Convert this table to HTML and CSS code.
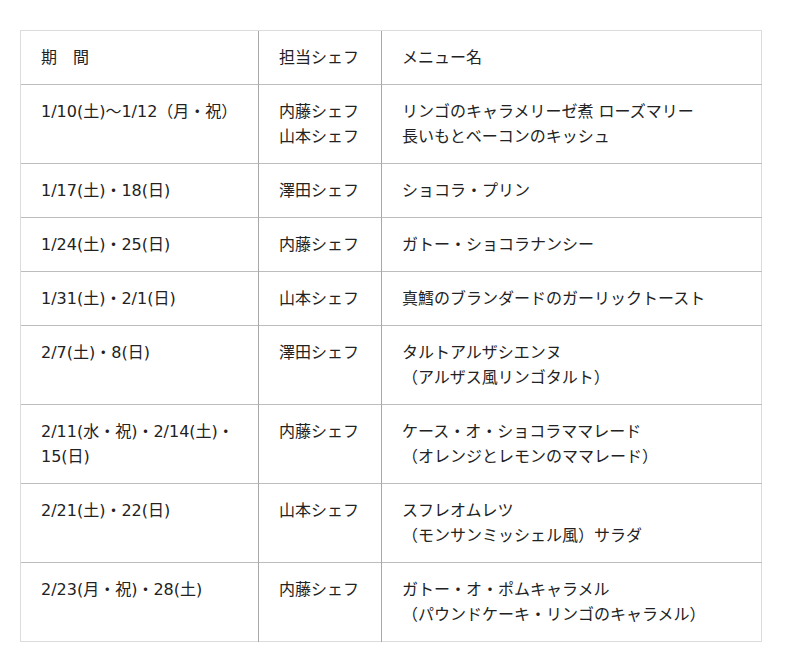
FILE: index.html
```html
<!DOCTYPE html>
<html lang="ja">
<head>
<meta charset="utf-8">
<link rel="stylesheet" href="styles.css">
</head>
<body>
<div class="wrap">
<table class="menu">
<colgroup><col class="c1"><col class="c2"><col class="c3"></colgroup>
<thead>
<tr><th>期　間</th><th>担当シェフ</th><th>メニュー名</th></tr>
</thead>
<tbody>
<tr><td>1/10(土)〜1/12（月・祝）</td><td>内藤シェフ<br>山本シェフ</td><td>リンゴのキャラメリーゼ煮 ローズマリー<br>長いもとベーコンのキッシュ</td></tr>
<tr><td>1/17(土)・18(日)</td><td>澤田シェフ</td><td>ショコラ・プリン</td></tr>
<tr><td>1/24(土)・25(日)</td><td>内藤シェフ</td><td>ガトー・ショコラナンシー</td></tr>
<tr><td>1/31(土)・2/1(日)</td><td>山本シェフ</td><td>真鱈のブランダードのガーリックトースト</td></tr>
<tr><td>2/7(土)・8(日)</td><td>澤田シェフ</td><td>タルトアルザシエンヌ<br>（アルザス風リンゴタルト）</td></tr>
<tr><td>2/11(水・祝)・2/14(土)・<br>15(日)</td><td>内藤シェフ</td><td>ケース・オ・ショコラママレード<br>（オレンジとレモンのママレード）</td></tr>
<tr><td>2/21(土)・22(日)</td><td>山本シェフ</td><td>スフレオムレツ<br>（モンサンミッシェル風）サラダ</td></tr>
<tr><td>2/23(月・祝)・28(土)</td><td>内藤シェフ</td><td>ガトー・オ・ポムキャラメル<br>（パウンドケーキ・リンゴのキャラメル）</td></tr>
</tbody>
</table>
</div>
</body>
</html>
```
FILE: styles.css
```css
html, body {
  margin: 0;
  padding: 0;
  background: #fff;
}
.wrap {
  padding: 30px 20px;
}
.menu {
  width: 742px;
  table-layout: fixed;
  border-collapse: collapse;
  border: 1px solid #dcdcdc;
  font-family: "DejaVu Sans", "Noto Sans CJK JP", sans-serif;
  font-size: 16px;
  line-height: 25px;
  color: #222;
}
.c1 { width: 238px; }
.c2 { width: 123px; }
.c3 { width: auto; }
.menu th, .menu td {
  text-align: left;
  font-weight: normal;
  vertical-align: top;
  padding: 14px 20px 14px 20px;
  border-top: 1px solid #bdbdbd;
  border-left: 1px solid #a8a8a8;
}
.menu th:first-child, .menu td:first-child { border-left: 1px solid #dcdcdc; }
.menu thead th { border-top: 1px solid #dcdcdc; }
```
